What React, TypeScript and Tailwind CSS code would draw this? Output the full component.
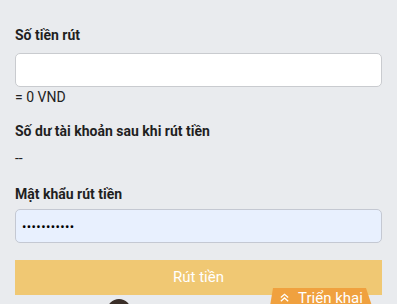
export default function App() {
    return (
        <div className="w-[397px] h-[304px] bg-[#e9ebee] overflow-hidden relative" style={{ fontFamily: 'Roboto, "Liberation Sans", sans-serif' }}>
            <div className="px-[15px] pt-[26px]">
                {/* Amount */}
                <div className="text-[14px] font-bold text-[#1f1f1f] leading-[18px]">Số tiền rút</div>
                <input type="text" className="mt-[9px] block w-full h-[34px] bg-white border border-[#c9cbcf] rounded-[5px] outline-none px-2 text-sm" />
                <div className="mt-[2px] text-[14px] text-[#222] leading-[17px]">= 0 VND</div>

                {/* Balance after */}
                <div className="mt-[16px] text-[14px] font-bold text-[#1f1f1f] leading-[18px]">Số dư tài khoản sau khi rút tiền</div>
                <div className="mt-[10px] text-[14px] text-[#222] leading-[17px]">--</div>

                {/* Password */}
                <div className="mt-[18px] text-[14px] font-bold text-[#1f1f1f] leading-[18px]">Mật khẩu rút tiền</div>
                <input type="password" defaultValue="12345678901" className="mt-[6px] block w-full h-[34px] bg-[#e8f0fe] border border-[#c4c8d2] rounded-[5px] outline-none px-[6px] text-[13px] tracking-[0.4px]" />

                <button className="mt-[17px] w-full h-[35px] bg-[#f0c873] text-white text-[15px]">Rút tiền</button>
            </div>

            {/* Expand tab */}
            <div className="absolute left-[270px] top-[288px] w-[102px] h-[18px] bg-[#f0a13f] [clip-path:polygon(3px_0,96px_0,100%_100%,0_100%)] flex items-center justify-center gap-[8px] text-white text-[15px] leading-[18px] pt-[1px]">
                <svg width="11" height="11" viewBox="0 0 12 12" fill="none" stroke="white" strokeWidth="1.4">
                    <path d="M2 6 L6 2.5 L10 6" />
                    <path d="M2 10 L6 6.5 L10 10" />
                </svg>
                <span>Triển khai</span>
            </div>

            {/* avatar peek */}
            <div className="absolute left-[107px] top-[299px] w-[24px] h-[24px] rounded-full bg-[#3a2e28]" />
        </div>
    )
}
